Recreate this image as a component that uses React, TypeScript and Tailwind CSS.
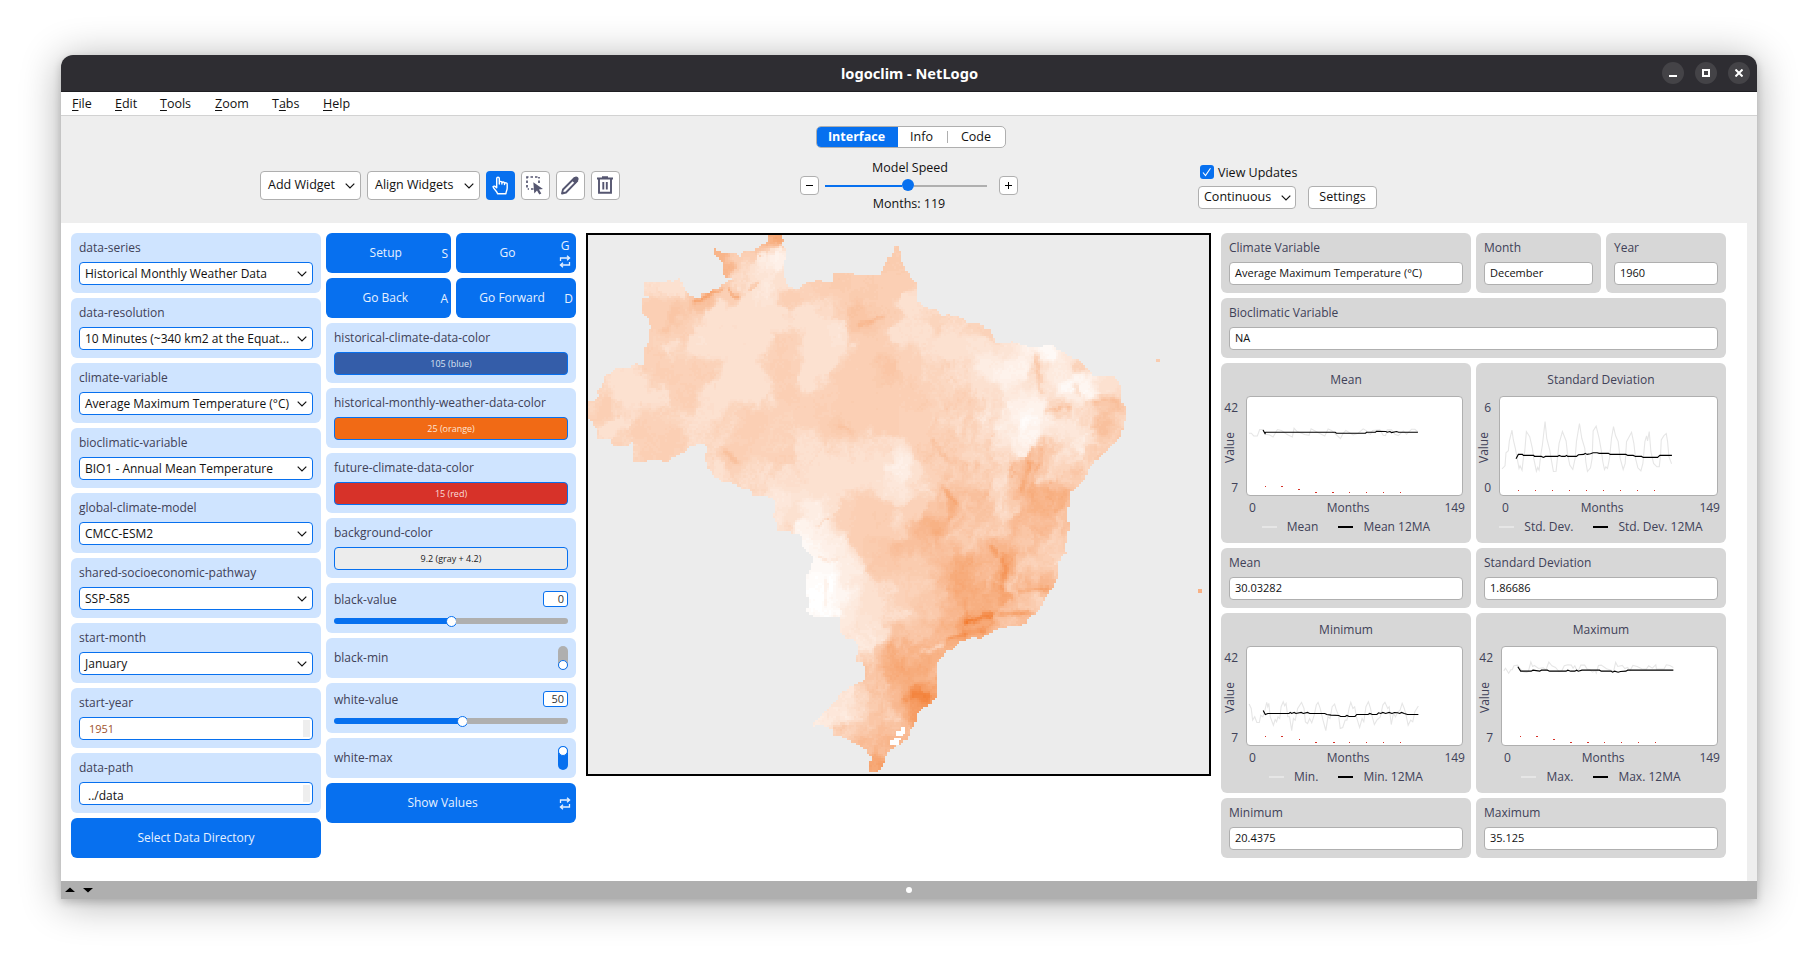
import React from "react";

/* ---------- Map ---------- */

const OUTLINE: number[] = [
  463,24,495,28,497,48,490,52,502,65,507,80,500,100,500,145,507,165,520,175,535,182,540,170,560,162,590,152,595,157,620,157,622,138,640,132,665,135,680,142,700,140,735,142,740,125,750,105,755,92,763,88,770,65,776,58,786,75,789,105,800,130,810,145,823,165,823,215,840,222,845,232,865,233,880,242,885,253,905,250,940,262,945,270,985,277,990,290,1005,292,1010,310,1020,327,1045,328,1060,326,1100,342,1120,342,1150,336,1165,340,1170,350,1190,358,1200,370,1220,375,1235,395,1250,410,1258,424,1310,426,1318,435,1326,460,1329,500,1340,510,1339,535,1332,555,1326,590,1300,620,1280,645,1262,660,1245,685,1240,705,1215,740,1197,745,1198,785,1194,800,1198,850,1192,870,1190,905,1192,920,1178,928,1172,945,1170,990,1155,1020,1140,1045,1130,1065,1122,1085,1095,1102,1092,1118,1030,1127,1010,1140,990,1148,985,1158,960,1155,930,1170,910,1188,895,1195,888,1212,873,1230,872,1320,862,1340,845,1350,825,1370,822,1395,810,1415,800,1440,780,1455,760,1470,748,1488,745,1508,727,1530,706,1532,706,1508,715,1495,700,1470,680,1455,650,1438,640,1430,622,1432,620,1415,597,1400,572,1402,575,1390,600,1360,620,1340,640,1310,665,1292,695,1275,698,1240,690,1225,672,1222,680,1200,678,1165,650,1158,640,1140,635,1100,628,1094,572,1094,555,1085,560,1060,555,1030,555,985,563,965,572,935,560,918,542,900,540,862,482,860,480,832,470,815,478,800,475,770,460,758,425,755,415,740,395,735,365,718,350,720,325,700,310,670,307,650,312,625,305,615,290,613,265,622,260,632,230,650,215,662,190,658,132,662,132,605,115,620,80,622,75,600,42,597,45,580,22,540,22,495,35,490,45,480,42,465,55,450,57,430,85,402,125,397,135,388,155,392,160,340,168,330,172,285,165,255,150,247,150,205,175,200,155,195,155,163,210,163,215,152,228,158,245,145,250,165,258,182,275,200,290,205,300,190,310,193,325,182,340,175,360,158,372,150,352,143,350,110,330,80,330,68,345,75,380,78,392,88,398,75,425,72,440,62,445,52,463,48,
];

/* x, y, intensity */
const SAMPLES: number[] = [
  180,180,.24,230,170,.2,230,250,.38,190,230,.3,190,350,.29,300,330,.2,215,345,.24,260,300,.29,330,240,.2,400,240,.21,350,330,.22,300,410,.29,200,420,.29,120,430,.22,60,520,.3,130,490,.22,80,560,.21,180,480,.22,250,480,.29,160,560,.29,180,630,.29,230,600,.29,30,500,.26,100,600,.26,
  480,40,.6,440,65,.38,340,90,.5,360,125,.5,380,100,.32,410,120,.25,470,90,.08,480,110,.1,490,150,.2,460,180,.14,430,200,.17,370,190,.3,310,205,.42,395,150,.25,
  520,200,.3,600,190,.3,640,150,.34,680,160,.32,680,235,.4,700,210,.33,690,280,.38,740,260,.33,775,100,.34,770,170,.3,800,220,.22,600,230,.25,560,260,.2,520,260,.23,480,250,.21,440,300,.21,500,330,.29,580,330,.2,630,300,.17,560,420,.2,500,400,.29,510,470,.29,400,400,.2,420,460,.2,350,460,.21,700,340,.3,760,400,.38,650,450,.3,700,500,.32,600,500,.28,760,560,.31,640,570,.34,800,470,.32,800,380,.27,790,300,.22,850,300,.22,870,290,.27,900,330,.21,950,280,.26,990,300,.28,930,400,.24,880,400,.26,1000,400,.12,980,340,.18,1050,350,.17,1040,410,.09,
  1130,350,.05,1150,345,.03,1180,360,.15,1090,400,.08,1125,400,.26,1130,450,.18,1170,400,.12,1215,400,.28,1200,450,.04,1240,460,.04,1215,475,.12,1290,440,.2,1320,460,.25,1300,500,.42,1330,530,.3,1290,560,.4,1250,530,.25,1310,600,.33,1170,515,.28,1110,520,.08,1090,550,.02,1100,580,.06,1060,560,.12,1020,520,.2,1150,560,.12,1200,560,.14,1240,600,.17,1080,620,.1,1200,650,.22,1260,650,.3,1130,640,.38,1090,690,.46,1110,740,.5,1070,700,.42,1160,700,.28,1210,710,.36,1160,750,.55,1140,800,.52,1180,840,.38,1090,820,.46,1120,840,.44,
  1040,720,.22,1030,660,.22,960,640,.28,1040,800,.24,1000,700,.33,970,760,.4,970,820,.38,900,770,.42,890,720,.34,870,640,.34,920,680,.32,860,560,.3,920,540,.27,980,580,.26,1000,480,.22,940,500,.3,880,850,.55,840,850,.46,830,800,.3,830,730,.24,785,680,.1,790,740,.16,740,680,.21,650,700,.22,600,740,.21,520,700,.23,500,660,.29,560,640,.23,650,640,.24,730,620,.24,460,600,.27,420,560,.3,350,560,.26,300,540,.22,280,580,.24,340,620,.25,370,650,.32,340,680,.23,420,700,.24,440,740,.25,480,760,.15,490,830,.15,510,840,.25,530,800,.2,570,790,.12,545,850,.07,560,890,.04,590,840,.1,600,960,.04,620,900,.11,590,1020,0,600,1080,0,570,1050,0,640,1030,.06,660,960,.12,650,1080,.14,680,1000,.17,680,880,.3,650,820,.28,700,810,.3,740,830,.32,780,830,.25,720,900,.35,780,910,.43,730,950,.36,820,960,.34,860,900,.42,930,870,.36,1000,860,.34,1020,920,.45,940,960,.54,900,960,.48,920,1010,.56,990,980,.46,1040,950,.55,1030,1040,.57,980,1070,.56,960,1110,.68,1000,1090,.6,940,1130,.62,900,1090,.46,890,1040,.38,830,1010,.31,760,1020,.24,720,1060,.22,780,1090,.24,850,1080,.34,700,1120,.18,720,1160,.18,640,1120,.15,690,1180,.14,780,1150,.4,840,1140,.36,880,1160,.46,910,1140,.55,980,1140,.52,1050,1110,.38,1080,1090,.46,1080,1060,.33,1130,1010,.52,1120,1060,.33,1090,960,.32,1080,1010,.38,1150,950,.31,1160,900,.3,1100,890,.38,1170,980,.36,
  850,1190,.5,810,1180,.52,770,1200,.55,730,1200,.4,700,1210,.28,710,1250,.4,760,1260,.52,800,1260,.55,860,1210,.52,830,1240,.55,840,1310,.85,860,1300,.62,810,1340,.66,800,1290,.58,760,1320,.46,720,1300,.38,690,1320,.27,650,1320,.15,640,1360,.17,600,1380,.15,680,1370,.27,740,1350,.38,800,1365,.55,820,1360,.62,760,1390,.34,700,1400,.33,640,1410,.3,770,1420,.46,700,1450,.42,800,1410,.46,740,1450,.46,720,1510,.6,860,1250,.47,
];

/* x1, y1, x2, y2, delta, width */
const RIDGES: number[][] = [
  [345,178,285,208,.2,6],[365,178,385,202,.25,5],[432,165,415,182,.15,5],[1120,370,1135,470,.12,6],[1215,450,1222,478,.14,5],
  [1140,520,1200,518,.14,6],[890,740,918,775,.16,7],[905,780,905,820,.12,7],[1110,620,1085,740,.12,7],[1135,620,1120,690,.1,7],
  [945,1112,1010,1095,.22,7],[1030,1098,1100,1085,.2,6],[900,1165,990,1130,.14,8],[1012,905,1016,930,.16,6],[1030,925,1042,1020,.13,7],
  [690,280,735,260,.1,6],[870,600,900,660,.08,7],[640,560,680,600,.06,8],[840,1190,885,1178,-.18,6],[585,937,630,937,.1,4],
  [595,1000,600,1060,.08,4],[610,820,580,835,.1,5],[1080,1025,1140,1018,.14,7],[355,640,385,660,.1,6],[200,300,215,290,.06,6],
];

const hash = (x: number, y: number) => {
  const s = Math.sin(x * 127.1 + y * 311.7) * 43758.5453;
  return s - Math.floor(s);
};
const noise = (x: number, y: number) => {
  const ix = Math.floor(x), iy = Math.floor(y);
  const fx = x - ix, fy = y - iy;
  const u = fx * fx * (3 - 2 * fx), v = fy * fy * (3 - 2 * fy);
  const a = hash(ix, iy), b = hash(ix + 1, iy), c = hash(ix, iy + 1), d = hash(ix + 1, iy + 1);
  return a + (b - a) * u + (c - a) * v + (a - b - c + d) * u * v;
};
const fbm = (x: number, y: number) =>
  noise(x, y) * 0.5 + noise(x * 2.1 + 7, y * 2.1 + 3) * 0.3 + noise(x * 4.3 + 1, y * 4.3 + 9) * 0.2;
const smooth = (a: number, b: number, x: number) => {
  const t = Math.max(0, Math.min(1, (x - a) / (b - a)));
  return t * t * (3 - 2 * t);
};

function inside(x: number, y: number) {
  let hit = false;
  for (let i = 0, j = OUTLINE.length - 2; i < OUTLINE.length; j = i, i += 2) {
    const xi = OUTLINE[i], yi = OUTLINE[i + 1], xj = OUTLINE[j], yj = OUTLINE[j + 1];
    if (yi > y !== yj > y && x < ((xj - xi) * (y - yi)) / (yj - yi) + xi) hit = !hit;
  }
  return hit;
}

function intensity(x0: number, y0: number) {
  const x = x0 + (fbm(x0 / 34, y0 / 42) - 0.5) * 58;
  const y = y0 + (fbm(x0 / 34 + 50, y0 / 42 + 50) - 0.5) * 58;
  let sum = 0, weight = 0;
  for (let i = 0; i < SAMPLES.length; i += 3) {
    const dx = x - SAMPLES[i], dy = (y - SAMPLES[i + 1]) * 0.9;
    const d2 = dx * dx + dy * dy + 160;
    const w = 1 / (d2 * d2);
    sum += SAMPLES[i + 2] * w;
    weight += w;
  }
  let v = sum / weight;
  const rx = x0 + (x - x0) * 0.5, ry = y0 + (y - y0) * 0.5;
  for (const [ax, ay, bx, by, delta, width] of RIDGES) {
    const lx = bx - ax, ly = by - ay;
    const t = Math.max(0, Math.min(1, ((rx - ax) * lx + (ry - ay) * ly) / (lx * lx + ly * ly)));
    const ex = rx - ax - lx * t, ey = ry - ay - ly * t;
    v += delta * Math.exp(-(ex * ex + ey * ey) / (width * width));
  }
  const rugged = Math.max(smooth(780, 920, x0) * smooth(380, 520, y0), smooth(1080, 1200, y0)) * smooth(0.04, 0.25, v);
  v += (fbm(x / 17 + y0 / 70, y / 36) - 0.5) * (0.04 + 0.15 * rugged);
  v += (hash(Math.round(x0), Math.round(y0)) - 0.5) * 0.012;
  if (v > 0.19 && v < 0.31) {
    const banded = 0.19 + 0.12 * smooth(0.2, 0.8, (v - 0.19) / 0.12);
    v += (banded - v) * (1 - rugged);
  }
  return Math.max(0, Math.min(1, v));
}

const COLS = 276;
const ROWS = 240;
const LEVELS = 50;

function buildPatches() {
  const paths: string[] = Array.from({ length: LEVELS + 1 }, () => "");
  for (let r = 0; r < ROWS; r++) {
    const y = 28 + ((r + 0.5) * 1509) / ROWS;
    let start = 0, level = -1;
    const flush = (c: number) => {
      if (level >= 0) paths[level] += `M${start} ${r}h${c - start}v1h${start - c}z`;
    };
    for (let c = 0; c <= COLS; c++) {
      const x = 19.6 + ((c + 0.5) * 1521.5) / COLS;
      const lagoon = (x > 784 && x < 795 && y > 1408 && y < 1425) || (x > 777 && x < 789 && y > 1419 && y < 1430) || (x > 772 && x < 784 && y > 1434 && y < 1442) || (x > 759 && x < 778 && y > 1442 && y < 1453);
      let next = -1;
      if (c < COLS && lagoon) next = 0;
      else if (c < COLS && inside(x, y)) next = Math.round(intensity(x, y) * LEVELS);
      if (next !== level) {
        flush(c);
        start = c;
        level = next;
      }
    }
  }
  return paths;
}

const PATCHES = buildPatches();
const shade = (t: number) =>
  `rgb(${Math.round(255 - 14 * t)},${Math.round(255 - 149 * t)},${Math.round(255 - 234 * t)})`;

function WorldView() {
  return (
    <div className="h-[543px] w-[625px] border-2 border-black bg-[#ececec]">
      <svg className="block h-full w-full" viewBox={`0 0 ${COLS} ${ROWS}`} preserveAspectRatio="none" shapeRendering="crispEdges">
        {PATCHES.map((d, i) => (d ? <path key={i} d={d} fill={shade(i / LEVELS)} /> : null))}
        <rect x="252.5" y="55" width="1.5" height="1.7" fill="#f9ccb0" />
        <rect x="271" y="157.5" width="2" height="2" fill="#f8b185" />
      </svg>
    </div>
  );
}

/* ---------- Widgets ---------- */

const Chevron = () => (
  <svg width="10" height="6" viewBox="0 0 10 6" fill="none" stroke="#111" strokeWidth="1.2">
    <path d="M.7.7 5 5 9.3.7" />
  </svg>
);

const Loop = () => (
  <svg width="12" height="13" viewBox="0 0 12 13" fill="none" stroke="#e6f0ff" strokeWidth="1.3">
    <path d="M1.5 6V3h8.5M8 .7 10.6 3 8 5.3M10.5 7v3H2M4 7.7 1.4 10 4 12.3" />
  </svg>
);

function Card({ label, children, className = "" }: { label: string; children: React.ReactNode; className?: string }) {
  return (
    <div className={`flex h-[60px] flex-col rounded-[6px] px-2 pt-[7px] ${className}`}>
      <div className="h-[22px] text-[12px] leading-4 whitespace-nowrap text-[#404157]">{label}</div>
      {children}
    </div>
  );
}

function Chooser({ label, value }: { label: string; value: string }) {
  return (
    <Card label={label} className="bg-[#cfe4ff]">
      <div className="flex h-[23px] items-center justify-between rounded-[4px] border border-[#0770ef] bg-white pr-[5px] pl-[5px] text-[12px] whitespace-nowrap text-[#111]">
        <span>{value}</span>
        <Chevron />
      </div>
    </Card>
  );
}

function InputField({ label, value, number }: { label: string; value: string; number?: boolean }) {
  return (
    <Card label={label} className="bg-[#cfe4ff]">
      <div className="flex h-[23px] items-center justify-between rounded-[4px] border border-[#0770ef] bg-white pr-[2px] pl-2">
        {number ? <span className="pt-px pl-px text-[11px] text-[#a0522d]">{value}</span> : <span className="pt-1 text-[12px] text-[#111]">{value}</span>}
        <span className="h-[17px] w-[7px] bg-[#eee]" />
      </div>
    </Card>
  );
}

function ColorField({ label, value, className }: { label: string; value: string; className: string }) {
  return (
    <Card label={label} className="bg-[#cfe4ff]">
      <div className={`flex h-[23px] items-center justify-center rounded-[4px] border border-[#0770ef] text-[9px] ${className}`}>{value}</div>
    </Card>
  );
}

function SliderWidget({ label, value, fill }: { label: string; value: string; fill: string }) {
  return (
    <div className="flex h-[50px] flex-col rounded-[6px] bg-[#cfe4ff] px-2 pt-2">
      <div className="flex h-4 items-center justify-between">
        <span className="pt-[2px] text-[12px] leading-4 text-[#404157]">{label}</span>
        <span className="flex h-4 w-[25px] items-center justify-end rounded-[3px] border border-[#0770ef] bg-white pr-[3px] text-[11px] text-[#333]">{value}</span>
      </div>
      <div className="mt-[8px] flex h-3 items-center">
        <span className={`h-[6px] rounded-l-full bg-[#0770ef] ${fill}`} />
        <span className="-ml-[2px] h-[11px] w-[11px] rounded-full border border-[#0770ef] bg-white" />
        <span className="-ml-[1px] h-[6px] flex-1 rounded-r-full bg-[#afafaf]" />
      </div>
    </div>
  );
}

function SwitchWidget({ label, on }: { label: string; on?: boolean }) {
  return (
    <div className="flex h-10 items-center justify-between rounded-[6px] bg-[#cfe4ff] px-2 text-[12px] text-[#404157]">
      <span>{label}</span>
      <span className={`flex h-6 w-[10px] rounded-full ${on ? "items-start bg-[#0770ef]" : "items-end bg-[#afafaf]"}`}>
        <span className="h-[10px] w-[10px] rounded-full border border-[#0770ef] bg-white" />
      </span>
    </div>
  );
}

function ActionButton({ label, hotkey, loop, className }: { label: string; hotkey?: string; loop?: boolean; className: string }) {
  return (
    <div className={`flex h-10 items-center rounded-[6px] bg-[#0770ef] text-[12px] text-[#e6f0ff] ${className}`}>
      <span className="flex-1 text-center">{label}</span>
      {(hotkey || loop) && (
        <span className={`flex flex-col items-center gap-[3px] leading-[13px] ${loop ? "mr-[5px]" : "mr-[3px] -ml-[2px]"}`}>
          {hotkey}
          {loop && <Loop />}
        </span>
      )}
    </div>
  );
}

function Monitor({ label, value, className = "" }: { label: string; value: string; className?: string }) {
  return (
    <Card label={label} className={`bg-[#d7d7d7] ${className}`}>
      <div className="flex h-[23px] items-center rounded-[4px] border border-[#afafaf] bg-white pb-px pl-[5px] text-[11px] whitespace-nowrap text-[#111]">{value}</div>
    </Card>
  );
}

/* ---------- Plots ---------- */

type PlotProps = {
  title: string;
  max: string;
  min: string;
  axisWidth: string;
  legendPad: string;
  legend: [string, string];
  box: [number, number, number, number];
  raw: string;
  avg: string;
  marks: number[][];
  markWidth: number;
};

function Plot({ title, max, min, axisWidth, legendPad, legend, box, raw, avg, marks, markWidth }: PlotProps) {
  return (
    <div className="h-[180px] w-[250px] rounded-[6px] bg-[#d7d7d7] text-[12px] text-[#404157]">
      <div className="pt-[9px] text-center leading-4">{title}</div>
      <div className="mt-2 flex h-[100px] pr-2">
        <div className={`flex flex-col ${axisWidth}`}>
          <span className="mt-[4px] pr-[8px] text-right leading-4">{max}</span>
          <span className="flex flex-1 items-center justify-center pr-[7px]">
            <span className="flex h-[34px] w-4 rotate-180 items-center justify-center [writing-mode:vertical-rl]">Value</span>
          </span>
          <span className="pr-[8px] text-right leading-4">{min}</span>
        </div>
        <div className="flex-1 rounded-[4px] border border-[#afafaf] bg-white">
          <svg className="block h-full w-full" viewBox={`${box[0]} ${box[1]} ${box[2]} ${box[3]}`} preserveAspectRatio="none" fill="none">
            <polyline points={raw} stroke="#e6e6e6" strokeWidth="1.1" vectorEffect="non-scaling-stroke" />
            <polyline points={avg} stroke="#000" strokeWidth="1.1" vectorEffect="non-scaling-stroke" />
            {marks.map(([x, y], i) => (
              <rect key={i} x={x - markWidth / 2} y={y - 1.5} width={i > 0 && i < 5 ? markWidth * 1.8 : markWidth} height="3" fill="#d73229" shapeRendering="crispEdges" />
            ))}
          </svg>
        </div>
      </div>
      <div className={`flex items-center justify-between pt-1 pr-[6px] leading-4 ${legendPad}`}>
        <span>0</span>
        <span className="pr-[4px]">Months</span>
        <span>149</span>
      </div>
      <div className="mt-[3px] flex items-center justify-center gap-[10px] leading-4">
        <span className="h-[2px] w-[15px] bg-[#e6e6e6]" />
        <span>{legend[0]}</span>
        <span className="ml-[10px] h-[2px] w-[15px] bg-black" />
        <span>{legend[1]}</span>
      </div>
    </div>
  );
}

const MEAN: PlotProps = {
  title: "Mean", max: "42", min: "7", axisWidth: "w-[25px]", legendPad: "pl-[28px]", legend: ["Mean", "Mean 12MA"], box: [112, 517, 644, 292],
  raw: "118,625 125,625 132,633 143,633 150,614 160,614 168,628 180,630 190,636 203,614 215,617 235,630 248,636 253,610 262,620 285,629 298,631 304,612 312,616 330,626 345,633 355,612 365,617 378,628 392,641 400,625 408,617 430,630 445,625 460,612 470,618 475,625 482,628 488,617 510,615 520,631 527,632 532,615 545,615 555,628 565,632 580,618 590,628 605,613 615,613 623,620",
  avg: "160,615 166,626 168,622 376,622 380,625 467,625 470,622 497,622 500,619 528,620 532,622 540,620 545,623 560,620 566,622 624,622",
  marks: [[166,784],[215,784],[266,793],[317,802],[368,802],[419,802],[469,802],[520,802],[571,802]], markWidth: 3,
};

const STD: PlotProps = {
  title: "Standard Deviation", max: "6", min: "0", axisWidth: "w-[23px]", legendPad: "pl-[26px]", legend: ["Std. Dev.", "Std. Dev. 12MA"], box: [91, 517, 650, 292],
  raw: "97,731 106,722 109,683 116,677 119,648 127,616 131,645 137,670 148,730 151,722 157,735 161,700 165,680 170,620 180,635 188,670 192,700 200,738 204,727 208,735 213,690 218,660 226,590 231,640 240,675 244,700 251,739 259,738 263,700 268,655 278,620 289,648 293,685 300,720 309,733 316,700 320,650 329,596 336,640 345,670 348,710 353,739 362,728 367,700 370,618 379,604 388,640 395,680 399,710 404,733 408,725 413,730 419,700 425,640 431,605 437,632 445,650 451,700 460,733 466,715 470,650 485,622 492,655 497,700 504,728 513,737 519,715 525,650 530,633 533,648 538,620 543,680 551,715 561,725 568,725 572,690 574,645 582,632 589,626 593,650 597,695 605,716",
  avg: "139,701 146,688 158,688 161,691 192,691 194,694 215,694 221,697 227,694 264,694 268,691 276,694 286,694 290,691 294,694 320,694 326,689 342,688 346,685 352,688 362,686 370,683 382,683 388,685 416,685 421,688 468,688 474,691 490,691 497,694 515,694 520,697 563,697 570,691 606,691",
  marks: [[145,796],[196,796],[247,796],[298,796],[349,796],[400,796],[453,796],[504,796],[555,796]], markWidth: 3,
};

const MIN: PlotProps = {
  title: "Minimum", max: "42", min: "7", axisWidth: "w-[25px]", legendPad: "pl-[28px]", legend: ["Min.", "Min. 12MA"], box: [106, 322, 611, 292],
  raw: "112,492 118,505 122,540 128,530 134,547 141,547 145,525 151,530 157,510 162,487 165,500 168,490 172,530 181,555 186,538 190,545 194,530 199,535 203,500 209,485 213,497 217,490 222,530 227,530 233,571 238,535 243,540 250,505 261,487 268,505 272,545 278,550 284,535 290,548 297,525 303,495 308,487 314,505 322,540 330,571 336,530 342,535 348,500 355,492 360,510 366,525 371,565 378,562 385,540 390,540 396,505 401,487 407,505 412,500 417,530 426,562 433,535 438,545 444,500 451,485 457,505 462,530 468,553 475,540 480,535 485,530 492,495 498,487 506,505 510,500 516,553 522,520 528,530 535,515 541,510 547,490 553,505 558,525 564,555 571,540 577,545 583,515 593,498",
  avg: "152,511 158,523 165,520 225,520 229,517 233,520 240,517 245,520 260,517 266,520 278,517 284,520 327,520 333,523 345,525 367,526 372,529 385,529 390,526 396,529 413,529 418,523 450,523 455,520 462,523 475,523 480,518 486,520 492,517 500,520 510,517 518,520 525,517 534,518 540,520 545,517 553,520 562,523 593,523",
  marks: [[158,589],[205,589],[254,598],[302,607],[351,607],[397,607],[446,607],[494,607],[543,607]], markWidth: 2.85,
};

const MAX: PlotProps = {
  title: "Maximum", max: "42", min: "7", axisWidth: "w-[25px]", legendPad: "pl-[28px]", legend: ["Max.", "Max. 12MA"], box: [833, 322, 611, 292],
  raw: "838,393 843,385 852,400 858,390 862,390 867,378 877,376 884,386 893,396 903,398 908,395 915,367 920,380 925,377 937,386 950,384 958,390 966,367 975,378 985,383 995,395 1003,393 1010,378 1020,375 1030,376 1035,385 1040,378 1046,393 1052,388 1057,376 1068,376 1075,388 1083,390 1090,397 1098,393 1101,400 1107,377 1115,376 1130,387 1145,392 1150,395 1156,368 1162,380 1175,377 1182,386 1190,383 1197,392 1205,377 1217,380 1230,387 1243,388 1250,378 1260,385 1270,375 1272,388 1283,388 1293,388 1300,375 1310,377 1320,383",
  avg: "878,381 886,394 916,394 921,391 940,394 945,391 962,391 968,394 1015,394 1020,391 1028,394 1040,394 1045,391 1050,394 1060,391 1110,391 1115,394 1143,394 1147,397 1153,394 1163,397 1170,395 1185,394 1190,391 1320,391",
  marks: [[885,589],[932,589],[980,598],[1028,607],[1077,607],[1124,607],[1173,607],[1221,607],[1270,607]], markWidth: 2.85,
};

/* ---------- Chrome ---------- */

function TitleBar() {
  return (
    <div className="grid h-[37px] grid-cols-[1fr_auto_1fr] items-center rounded-t-[12px] border-b border-[#1e1e22] bg-[#2e2d32]">
      <span />
      <span className="pt-px pl-px font-['Noto_Sans',sans-serif] text-[14.6px] font-bold text-white">logoclim - NetLogo</span>
      <div className="flex justify-end gap-[11px] pr-[7px]">
        <span className="flex h-[22px] w-[22px] justify-center rounded-full bg-[#444347] pt-[13px]">
          <span className="h-[2px] w-2 bg-white" />
        </span>
        <span className="flex h-[22px] w-[22px] items-center justify-center rounded-full bg-[#444347]">
          <span className="h-2 w-2 border-2 border-white" />
        </span>
        <span className="flex h-[22px] w-[22px] items-center justify-center rounded-full bg-[#444347]">
          <svg width="8" height="8" viewBox="0 0 8 8" stroke="#fff" strokeWidth="2"><path d="M.5.5l7 7M7.5.5l-7 7" /></svg>
        </span>
      </div>
    </div>
  );
}

function Menu({ before = "", u, after, className }: { before?: string; u: string; after: string; className: string }) {
  return (
    <span className={className}>
      {before}
      <span className="underline underline-offset-2">{u}</span>
      {after}
    </span>
  );
}

const box = "flex items-center justify-between rounded-[4px] border border-[#afafaf] bg-white text-[12.5px] text-[#111]";

function Toolbar() {
  return (
    <div className="h-[107px] bg-[#eee]">
      <div className="flex justify-center pt-[10px] pl-[3px]">
        <div className="flex h-[22px] w-[190px] overflow-hidden rounded-[5px] border border-[#afafaf] bg-white text-[12.5px] text-[#111]">
          <span className="-m-px flex w-[82px] items-center justify-center bg-[#0770ef] font-bold text-white">Interface</span>
          <span className="flex w-[50px] items-center justify-center">Info</span>
          <span className="my-1 w-px bg-[#afafaf]" />
          <span className="flex flex-1 items-center justify-center">Code</span>
        </div>
      </div>
      <div className="flex items-start pt-[12px] pl-[199px]">
        <div className="mt-[11px] flex h-[29px] w-[360px] gap-[6px]">
          <div className={`${box} w-[101px] pr-[5px] pl-[7px]`}><span>Add Widget</span><Chevron /></div>
          <div className={`${box} w-[113px] pr-[5px] pl-[7px]`}><span>Align Widgets</span><Chevron /></div>
          <div className="h-[29px] w-[29px] rounded-[4px] bg-[#0770ef]">
            <svg width="29" height="29" viewBox="0 0 29 29" fill="none" stroke="#fff" strokeWidth="1.4" strokeLinejoin="round">
              <path d="M10.7 16.8V7.6a1.3 1.3 0 0 1 2.6 0V13v-1.4a1.3 1.3 0 0 1 2.6.2V13v-.9a1.3 1.3 0 0 1 2.6.3v1.1-.6a1.3 1.3 0 0 1 2.7.6V17c0 2.4-1.3 3.6-1.3 5.8h-8.4C11.2 20 7.6 18.3 7 15.6c.9-1 2.4-.4 3.7 1.2z" />
            </svg>
          </div>
          <div className="h-[29px] w-[29px] rounded-[4px] border border-[#afafaf] bg-white">
            <svg width="27" height="27" viewBox="1 1 27 27" fill="none" stroke="#555670" strokeWidth="1.7">
              <path d="M6 7.5V6h1.500M9.500 6h2.500M14 6h2.500M18 6v1.500M18 9.500v2.500M6 9.500v2.500M6 14v2.500M6.700 18H8M10 18h2.500" />
              <path d="M12.300 11.200 22 18l-4 .5 2.300 4-2 1.100-2.300-4-2.700 2.900z" fill="#555670" stroke="none" />
            </svg>
          </div>
          <div className="h-[29px] w-[29px] rounded-[4px] border border-[#afafaf] bg-white">
            <svg width="27" height="27" viewBox="1 1 27 27" fill="none" stroke="#555670" strokeWidth="1.900" strokeLinejoin="round">
              <path d="M6 22.500 7 18.500 18.500 7l2.800 2.800L10 21.500z" />
              <path d="m15.500 9.300 2.800-3c1-1 2.700-.9 3.600 0s1 2.400 0 3.500l-2.700 2.900z" fill="#555670" stroke="none" />
            </svg>
          </div>
          <div className="h-[29px] w-[29px] rounded-[4px] border border-[#afafaf] bg-white">
            <svg width="27" height="27" viewBox="1 1 27 27" fill="none" stroke="#555670" strokeWidth="1.900">
              <path d="M6 7.500h16M11 6.300h6M8 7.500v14.200h12V7.500M12.300 11v7.500M15.800 11v7.500" />
            </svg>
          </div>
        </div>
        <div className="ml-[180px] flex w-[218px] flex-col text-[12.500px] text-[#111]">
          <span className="pl-[2px] text-center leading-4">Model Speed</span>
          <div className="flex h-[19px] items-center">
            <span className="flex h-[19px] w-[19px] items-center justify-center rounded-[4px] border border-[#afafaf] bg-white"><span className="h-px w-[7px] bg-black" /></span>
            <span className="ml-[6px] h-[2px] w-[77px] bg-[#0770ef]" />
            <span className="-mt-px h-3 w-3 rounded-full bg-[#0770ef]" />
            <span className="h-[2px] w-[73px] bg-[#afafaf]" />
            <span className="ml-3 flex h-[19px] w-[19px] items-center justify-center rounded-[4px] border border-[#afafaf] bg-white">
              <svg width="7" height="7" viewBox="0 0 7 7" stroke="#000"><path d="M0 3.500h7M3.500 0v7" /></svg>
            </span>
          </div>
          <span className="text-center leading-[18px]">Months: 119</span>
        </div>
        <div className="ml-[180px] flex flex-col gap-[7px] pt-[5px] text-[12.500px] text-[#111]">
          <div className="flex h-[14px] items-center gap-1 pl-[2px] whitespace-nowrap">
            <span className="flex h-[14px] w-[14px] items-center justify-center rounded-[3px] bg-[#0770ef]">
              <svg width="10" height="10" viewBox="0 0 10 10" fill="none" stroke="#fff" strokeWidth="1.100"><path d="M1 5.500 3.500 8.500 8.500 1.200" /></svg>
            </span>
            <span className="pt-[2px]">View Updates</span>
          </div>
          <div className="flex gap-3">
            <div className={`${box} h-[23px] w-[98px] pr-1 pl-[5px]`}><span>Continuous</span><Chevron /></div>
            <div className="flex h-[23px] w-[69px] items-center justify-center rounded-[4px] border border-[#afafaf] bg-white">Settings</div>
          </div>
        </div>
      </div>
    </div>
  );
}

export default function App() {
  return (
    <div className="h-[966px] w-[1818px] overflow-hidden bg-white pt-[55px] pl-[61px] font-['Open_Sans',sans-serif]">
      <div className="h-[844px] w-[1696px] rounded-t-[12px] bg-[#eee] shadow-[0_3px_8px_rgba(0,0,0,0.18),0_4px_40px_rgba(0,0,0,0.32)]">
        <TitleBar />
        <div className="flex h-6 items-center border-b border-[#d2d2d2] bg-white pt-[2px] pl-[11px] text-[12.5px] text-[#111]">
          <Menu className="w-[43px]" u="F" after="ile" />
          <Menu className="w-[45px]" u="E" after="dit" />
          <Menu className="w-[55px]" u="T" after="ools" />
          <Menu className="w-[57px]" u="Z" after="oom" />
          <Menu className="w-[51px]" before="T" u="a" after="bs" />
          <Menu className="w-[40px]" u="H" after="elp" />
        </div>
        <Toolbar />
        <div className="flex h-[658px] w-[1686px] items-start bg-white pt-[10px] pl-[10px]">
          <div className="flex w-[250px] flex-col gap-[5px]">
            <Chooser label="data-series" value="Historical Monthly Weather Data" />
            <Chooser label="data-resolution" value="10 Minutes (~340 km2 at the Equat..." />
            <Chooser label="climate-variable" value="Average Maximum Temperature (°C)" />
            <Chooser label="bioclimatic-variable" value="BIO1 - Annual Mean Temperature" />
            <Chooser label="global-climate-model" value="CMCC-ESM2" />
            <Chooser label="shared-socioeconomic-pathway" value="SSP-585" />
            <Chooser label="start-month" value="January" />
            <InputField label="start-year" value="1951" number />
            <InputField label="data-path" value="../data" />
            <ActionButton label="Select Data Directory" className="w-[250px]" />
          </div>
          <div className="ml-[5px] flex w-[250px] flex-col gap-[5px]">
            <div className="flex gap-[5px]">
              <ActionButton label="Setup" hotkey="S" className="w-[125px] pl-[2px]" />
              <ActionButton label="Go" hotkey="G" loop className="w-[120px]" />
            </div>
            <div className="flex gap-[5px]">
              <ActionButton label="Go Back" hotkey="A" className="w-[125px] pl-[2px]" />
              <ActionButton label="Go Forward" hotkey="D" className="w-[120px] pl-[2px]" />
            </div>
            <ColorField label="historical-climate-data-color" value="105 (blue)" className="bg-[#345da9] text-[#d9e2f2]" />
            <ColorField label="historical-monthly-weather-data-color" value="25 (orange)" className="bg-[#f16a15] text-[#fde4d3]" />
            <ColorField label="future-climate-data-color" value="15 (red)" className="bg-[#d73229] text-[#fbdcda]" />
            <ColorField label="background-color" value="9.2 (gray + 4.2)" className="bg-[#ececec] text-[#222]" />
            <SliderWidget label="black-value" value="0" fill="w-[114px]" />
            <SwitchWidget label="black-min" />
            <SliderWidget label="white-value" value="50" fill="w-[125px]" />
            <SwitchWidget label="white-max" on />
            <ActionButton label="Show Values" loop className="w-[250px]" />
          </div>
          <div className="ml-[10px]">
            <WorldView />
          </div>
          <div className="ml-[10px] flex w-[505px] flex-col gap-[5px]">
            <div className="flex gap-[5px]">
              <Monitor label="Climate Variable" value="Average Maximum Temperature (°C)" className="w-[250px]" />
              <Monitor label="Month" value="December" className="w-[125px]" />
              <Monitor label="Year" value="1960" className="w-[120px]" />
            </div>
            <Monitor label="Bioclimatic Variable" value="NA" />
            <div className="flex gap-[5px]">
              <Plot {...MEAN} />
              <Plot {...STD} />
            </div>
            <div className="flex gap-[5px]">
              <Monitor label="Mean" value="30.03282" className="w-[250px]" />
              <Monitor label="Standard Deviation" value="1.86686" className="w-[250px]" />
            </div>
            <div className="flex gap-[5px]">
              <Plot {...MIN} />
              <Plot {...MAX} />
            </div>
            <div className="flex gap-[5px]">
              <Monitor label="Minimum" value="20.4375" className="w-[250px]" />
              <Monitor label="Maximum" value="35.125" className="w-[250px]" />
            </div>
          </div>
        </div>
        <div className="flex h-[18px] items-center bg-[#afafaf] pl-1">
          <svg width="30" height="8" viewBox="0 0 30 8" fill="#000"><path d="M0 6h10L5 1.500zM18 2h10l-5 4.500z" /></svg>
          <span className="ml-[811px] h-[6px] w-[6px] rounded-full bg-white" />
        </div>
      </div>
    </div>
  );
}
